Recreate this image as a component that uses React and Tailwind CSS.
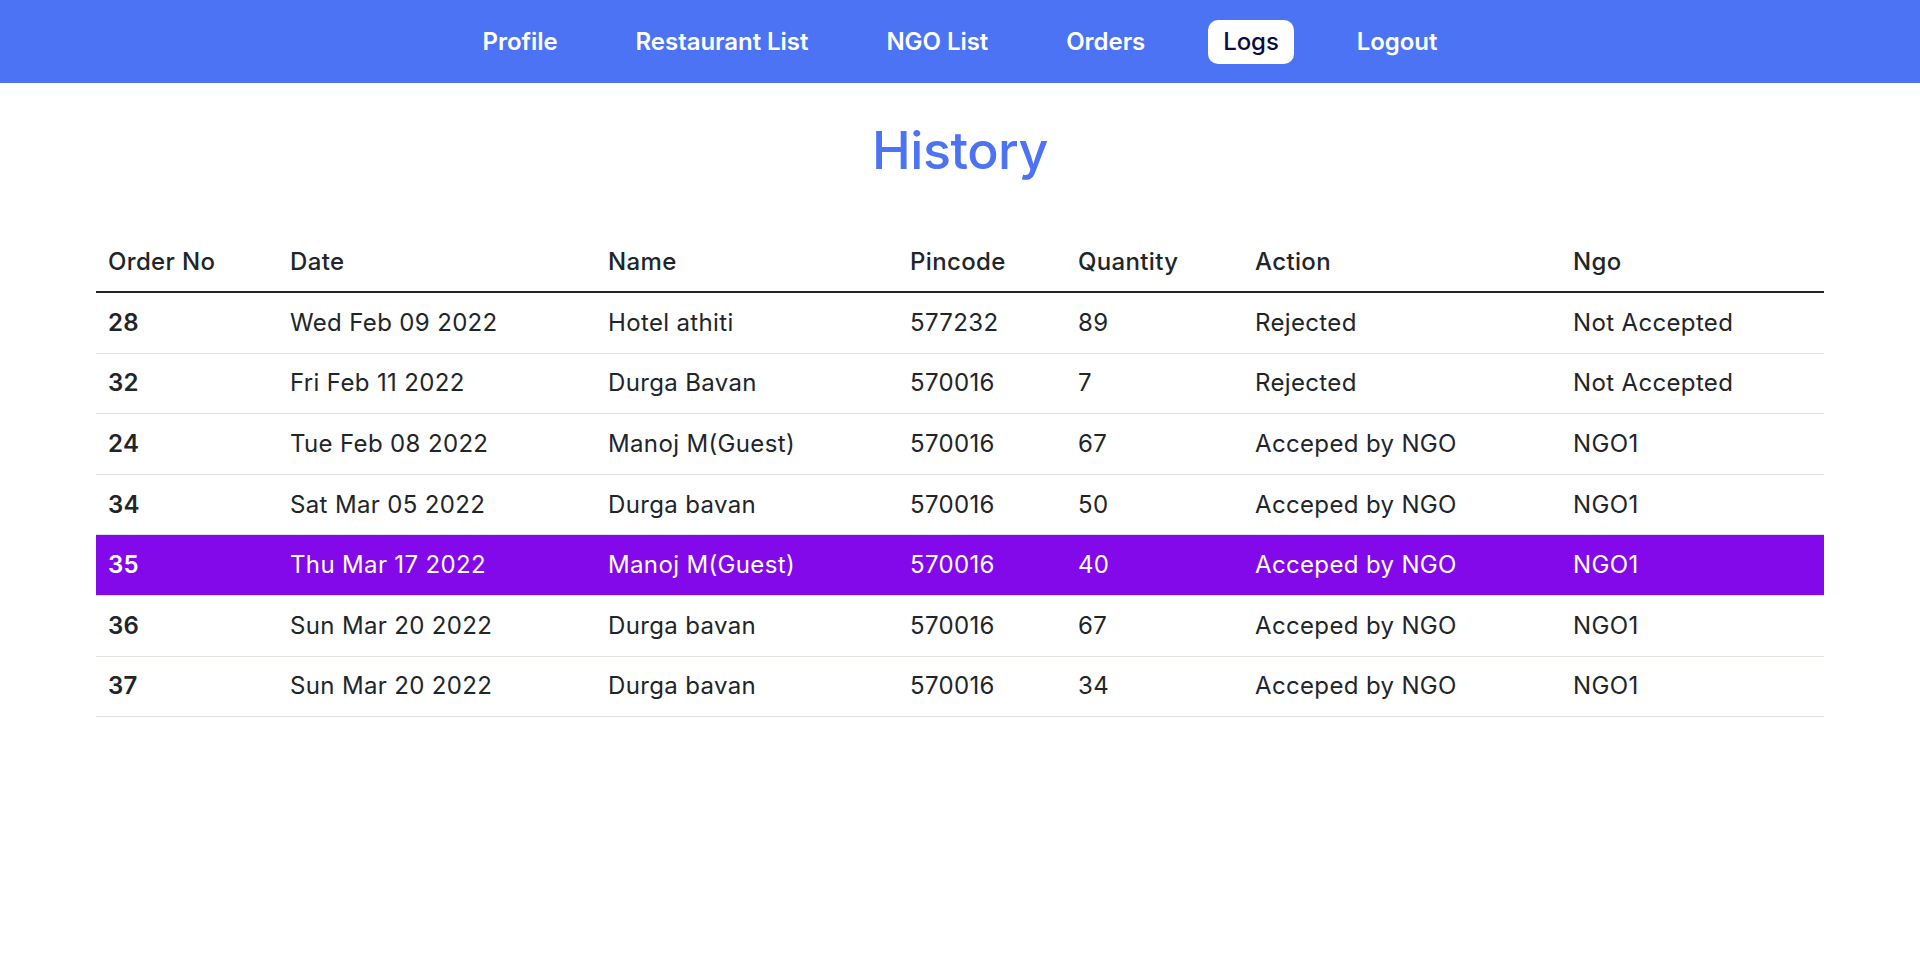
import React from "react";

const rows = [
  ["28", "Wed Feb 09 2022", "Hotel athiti", "577232", "89", "Rejected", "Not Accepted"],
  ["32", "Fri Feb 11 2022", "Durga Bavan", "570016", "7", "Rejected", "Not Accepted"],
  ["24", "Tue Feb 08 2022", "Manoj M(Guest)", "570016", "67", "Acceped by NGO", "NGO1"],
  ["34", "Sat Mar 05 2022", "Durga bavan", "570016", "50", "Acceped by NGO", "NGO1"],
  ["35", "Thu Mar 17 2022", "Manoj M(Guest)", "570016", "40", "Acceped by NGO", "NGO1"],
  ["36", "Sun Mar 20 2022", "Durga bavan", "570016", "67", "Acceped by NGO", "NGO1"],
  ["37", "Sun Mar 20 2022", "Durga bavan", "570016", "34", "Acceped by NGO", "NGO1"],
];

const headers = ["Order No", "Date", "Name", "Pincode", "Quantity", "Action", "Ngo"];
const widths = [182, 318, 302, 168, 177, 318, 263];

const navItems = ["Profile", "Restaurant List", "NGO List", "Orders", "Logs", "Logout"];

export default function App() {
  return (
    <div className="min-h-screen bg-white font-['Inter','Noto_Sans',sans-serif] text-[#212529]">
      <nav className="h-[83px] bg-[#4b73f4] flex items-center justify-center gap-[48px]">
        {navItems.map((item) => (
          <a
            key={item}
            className={
              item === "Logs"
                ? "h-[44px] px-[15px] flex items-center rounded-[10px] bg-white text-[#0b0b47] text-[24px] font-medium tracking-[-0.1px]"
                : "h-[44px] px-[15px] flex items-center text-white text-[24px] font-semibold tracking-[-0.05px]"
            }
          >
            {item}
          </a>
        ))}
      </nav>

      <h1 className="mt-[37px] text-center text-[52px] leading-[62px] font-medium text-[#4b73f4] tracking-[-0.5px]">
        History
      </h1>

      <table className="mt-[50px] mx-auto w-[1728px] table-fixed border-collapse text-[24px] leading-[36px] tracking-[0.35px]">
        <colgroup>
          {widths.map((w, i) => (
            <col key={i} style={{ width: w }} />
          ))}
        </colgroup>
        <thead>
          <tr className="border-b-2 border-[#212529]">
            {headers.map((h) => (
              <th key={h} className="px-[12px] pt-[12px] pb-[11px] text-left font-medium">
                {h}
              </th>
            ))}
          </tr>
        </thead>
        <tbody>
          {rows.map((r) => {
            const active = r[0] === "35";
            return (
              <tr
                key={r[0]}
                className={
                  active
                    ? "border-b border-[#dee2e6] bg-[#8308ea] text-white"
                    : "border-b border-[#dee2e6]"
                }
              >
                {r.map((c, i) => (
                  <td
                    key={i}
                    className={
                      i === 0
                        ? "px-[12px] py-[11.8px] font-semibold"
                        : "px-[12px] py-[11.8px] font-normal"
                    }
                  >
                    {c}
                  </td>
                ))}
              </tr>
            );
          })}
        </tbody>
      </table>
    </div>
  );
}
